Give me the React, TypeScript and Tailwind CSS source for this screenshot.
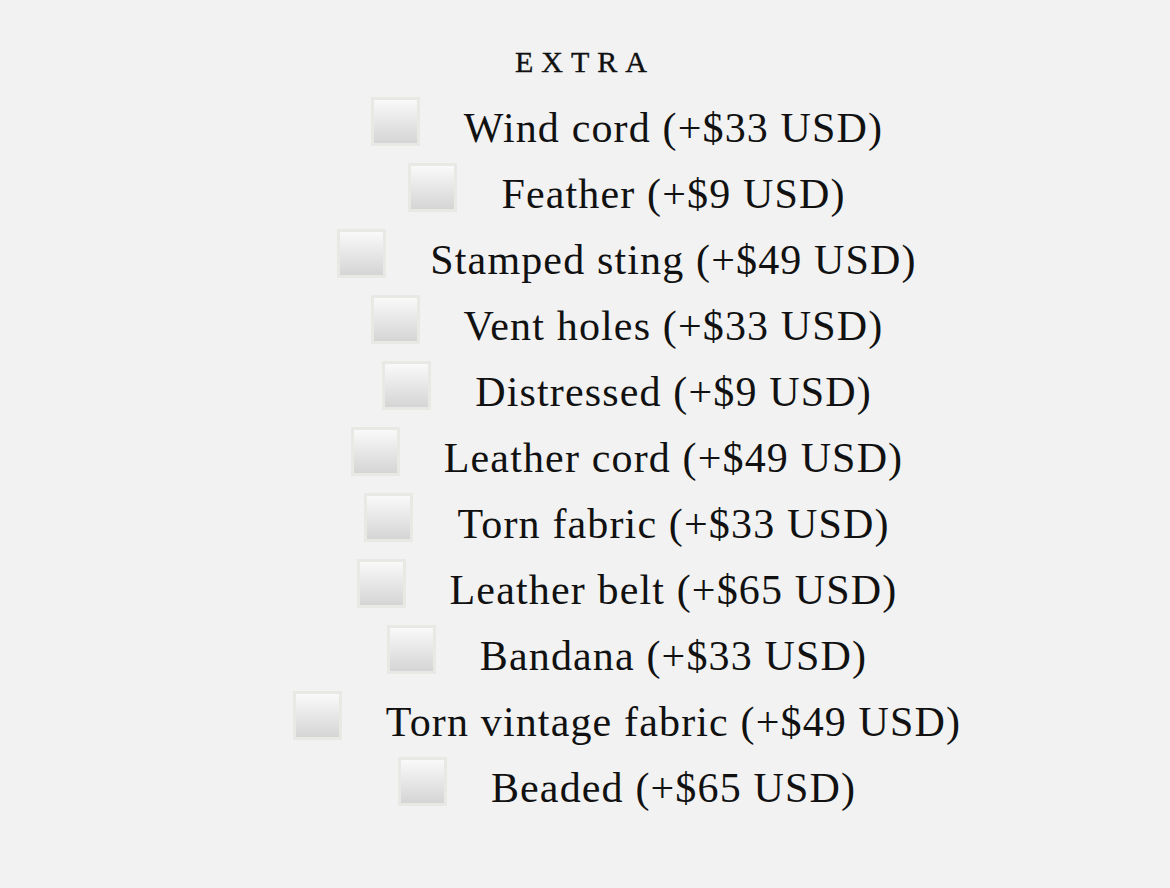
import React from "react";

const items = [
  "Wind cord (+$33 USD)",
  "Feather (+$9 USD)",
  "Stamped sting (+$49 USD)",
  "Vent holes (+$33 USD)",
  "Distressed (+$9 USD)",
  "Leather cord (+$49 USD)",
  "Torn fabric (+$33 USD)",
  "Leather belt (+$65 USD)",
  "Bandana (+$33 USD)",
  "Torn vintage fabric (+$49 USD)",
  "Beaded (+$65 USD)",
];

export default function App() {
  return (
    <div
      className="min-h-screen w-full bg-[#f2f2f2] text-[#111] pt-[47px]"
      style={{ fontFamily: '"Liberation Serif", "Times New Roman", serif' }}
    >
      <div className="flex justify-center">
        <h2 className="text-[30px] leading-[30px] uppercase tracking-[8px] font-normal pl-[8px] mr-[8px] [-webkit-text-stroke:0.4px_#111]">
          Extra
        </h2>
      </div>
      <div className="flex flex-col items-center pl-[84px] mt-[20px]">
        {items.map((label) => (
          <label key={label} className="flex items-start gap-[44px] h-[66px] cursor-pointer">
            <span className="block w-[49px] h-[49px] border-[3px] border-[#e8e8e5] bg-gradient-to-b from-[#f9f9f9] to-[#d5d5d5] shrink-0" />
            <span className="text-[42px] leading-[48px] tracking-[1.15px] mt-[7px] whitespace-nowrap">
              {label}
            </span>
          </label>
        ))}
      </div>
    </div>
  );
}
